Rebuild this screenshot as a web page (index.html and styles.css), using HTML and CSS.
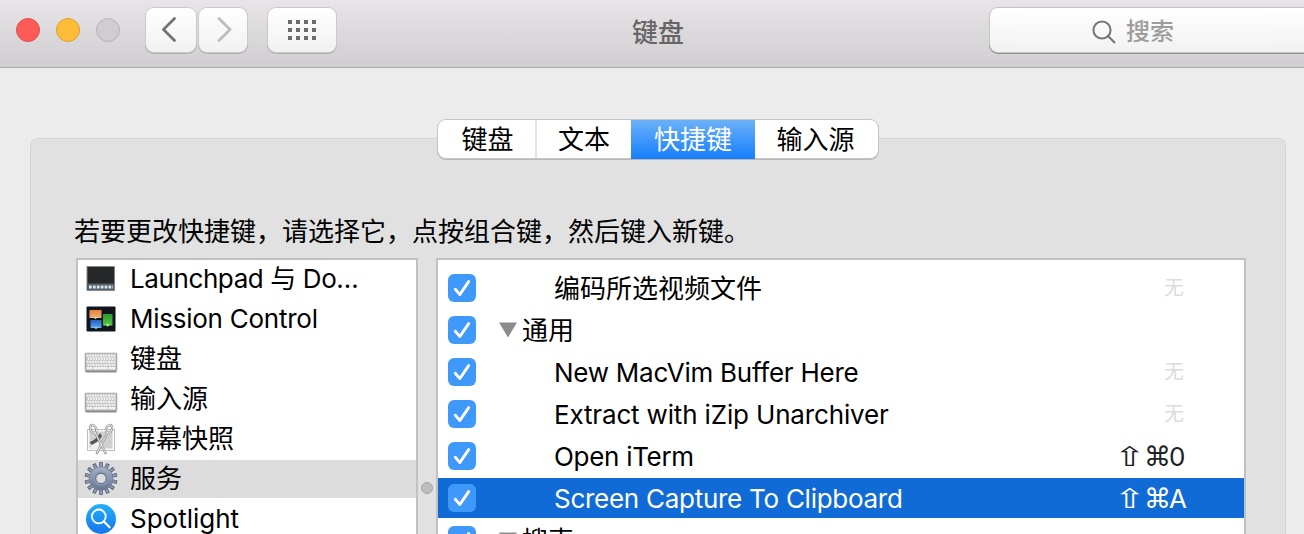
FILE: index.html
```html
<!DOCTYPE html>
<html lang="zh-CN">
<head>
<meta charset="utf-8">
<title>键盘</title>
<link rel="stylesheet" href="styles.css">
</head>
<body>
<svg width="0" height="0" class="defs">
  <defs>
    <linearGradient id="spot" x1="0" y1="0" x2="0" y2="1"><stop offset="0" stop-color="#22b2f6"/><stop offset="1" stop-color="#1673ee"/></linearGradient>
    <linearGradient id="gear" x1="0" y1="0" x2="0" y2="1"><stop offset="0" stop-color="#a6b3ca"/><stop offset="1" stop-color="#66758f"/></linearGradient>
    <linearGradient id="org" x1="0" y1="0" x2="0" y2="1"><stop offset="0" stop-color="#e5823c"/><stop offset="1" stop-color="#f2ad72"/></linearGradient>
    <linearGradient id="grn" x1="0" y1="0" x2="0" y2="1"><stop offset="0" stop-color="#2c9a2b"/><stop offset="1" stop-color="#52c646"/></linearGradient>
    <linearGradient id="blu" x1="0" y1="0" x2="0" y2="1"><stop offset="0" stop-color="#2361c0"/><stop offset="1" stop-color="#58a0ee"/></linearGradient>
    <symbol id="check" viewBox="0 0 28 28"><path d="M7.3 15.2 L11.8 20.6 L20.7 7.6" fill="none" stroke="#2f7fd6" stroke-width="3" stroke-linecap="round" stroke-linejoin="round" opacity=".6" transform="translate(0 .9)"/><path d="M7.3 15.2 L11.8 20.6 L20.7 7.6" fill="none" stroke="#fff" stroke-width="2.9" stroke-linecap="round" stroke-linejoin="round"/></symbol>
    <symbol id="kbd" viewBox="0 0 34 22">
      <rect x=".5" y="1.5" width="33" height="19.5" rx="1" fill="#8a8a8a"/>
      <rect x=".5" y=".5" width="33" height="18.5" rx="1" fill="#c4c4c4" stroke="#a2a2a2"/>
      <g stroke="#f1f1f1" stroke-width="2.3" stroke-dasharray="2 .8"><path d="M2 3.2H32"/><path d="M3 6.5H32"/><path d="M2 9.8H32"/><path d="M3 13.1H32"/></g>
      <path d="M2 16.4H8M9 16.4H24M25 16.4H32" stroke="#f1f1f1" stroke-width="2.3"/>
    </symbol>
  </defs>
</svg>
<header class="toolbar">
  <div class="lights"><i class="light red"></i><i class="light yellow"></i><i class="light off"></i></div>
  <div class="nav">
    <div class="btn back"><svg width="50" height="44" viewBox="0 0 50 44"><path d="M28.5 10.5 L17.5 21.5 L28.5 32.5" fill="none" stroke="#727272" stroke-width="2.8" stroke-linecap="round"/></svg></div>
    <div class="btn forward"><svg width="48" height="44" viewBox="0 0 48 44"><path d="M20 10.5 L31 21.5 L20 32.5" fill="none" stroke="#bdbdbd" stroke-width="2.8" stroke-linecap="round"/></svg></div>
  </div>
  <div class="btn all"><svg width="68" height="44" viewBox="0 0 68 44"><path d="M20 14H48M20 22H48M20 30H48" stroke="#6c6c6c" stroke-width="4" stroke-dasharray="4 4"/></svg></div>
  <div class="title">键盘</div>
  <div class="search"><svg width="26" height="26" viewBox="0 0 26 26"><g fill="none" stroke="#747474" stroke-width="2" stroke-linecap="round"><circle cx="11" cy="11" r="8.6"/><path d="M17.3 17.3 L23.5 23.5"/></g></svg><span>搜索</span></div>
</header>
<main class="content">
  <nav class="tabs"><div class="tab t1">键盘</div><div class="tab t2">文本</div><div class="tab t3">快捷键</div><div class="tab t4">输入源</div></nav>
  <section class="panel">
    <p class="hint">若要更改快捷键，请选择它，点按组合键，然后键入新键。</p>
    <div class="lists">
      <div class="cats">
        <div class="cat"><svg width="36" height="38" viewBox="0 0 36 38"><rect x="4" y="6.5" width="27.5" height="24" fill="#252729" stroke="#85898e"/><path d="M4.5 23.5H31V30H4.5z" fill="#53606c"/><path d="M6 27H30" stroke="#d4e3ec" stroke-width="3.2" stroke-dasharray="2.8 1.1"/></svg><span class="ls1">Launchpad 与 Do…</span></div>
        <div class="cat"><svg width="36" height="38" viewBox="0 0 36 38"><rect x="3.5" y="6.5" width="29" height="25" rx="1" fill="#11151c"/><rect x="6.5" y="10" width="12" height="8" fill="url(#org)"/><rect x="20" y="14" width="9.5" height="11.5" fill="url(#grn)"/><rect x="7.5" y="20" width="11" height="8" fill="url(#blu)"/><path d="M9 17.5h7M9 27.3h8M21 24.8h7" stroke="#fff" opacity=".3"/><circle cx="12.5" cy="17.7" r="1.2" fill="#b6dc90"/><circle cx="13" cy="27.8" r="1.3" fill="#6bd6e0"/><circle cx="24.7" cy="25" r="1.4" fill="#a4ef88"/></svg><span class="ls2">Mission Control</span></div>
        <div class="cat"><svg width="36" height="38" viewBox="0 0 36 38"><use href="#kbd" x="1" y="12.5" width="34" height="21"/></svg><span>键盘</span></div>
        <div class="cat"><svg width="36" height="38" viewBox="0 0 36 38"><use href="#kbd" x="1" y="12.5" width="34" height="21"/></svg><span>输入源</span></div>
        <div class="cat"><svg width="36" height="38" viewBox="0 0 36 38"><rect x="4.5" y="9.5" width="27" height="21" fill="#fafafa" stroke="#bdbdbd"/><path d="M6.5 11.5H29.5V28.5H6.5z" fill="#d0d0d0"/><path d="M6.5 22Q13 20 17 13L19 16L14 24L9 25z" fill="#555"/><path d="M6.5 28.5L9 25L17 20L15 28.5z" fill="#efefef"/><g fill="none" stroke="#8c8c8c" stroke-width="2.4"><path d="M12 12.5L23 34M24.5 12.5L13.5 34"/><ellipse cx="10.3" cy="9" rx="2.8" ry="4.2" transform="rotate(-25 10.3 9)"/><ellipse cx="26" cy="9" rx="2.8" ry="4.2" transform="rotate(25 26 9)"/></g><g fill="none" stroke="#e4e4e4" stroke-width="1.1"><path d="M12 12.5L22.7 33.3M24.5 12.5L13.8 33.3"/><ellipse cx="10.3" cy="9" rx="2.8" ry="4.2" transform="rotate(-25 10.3 9)"/><ellipse cx="26" cy="9" rx="2.8" ry="4.2" transform="rotate(25 26 9)"/></g></svg><span>屏幕快照</span></div>
        <div class="cat selected"><svg width="36" height="38" viewBox="0 0 36 38"><g transform="translate(18 18.5)"><g stroke="#536077" stroke-width="3.6"><path id="t" d="M0 -16.4V16.4"/><use href="#t" transform="rotate(25.7)"/><use href="#t" transform="rotate(51.4)"/><use href="#t" transform="rotate(77.1)"/><use href="#t" transform="rotate(102.9)"/><use href="#t" transform="rotate(128.6)"/><use href="#t" transform="rotate(154.3)"/></g><g stroke="#8e9bb2" stroke-width="2"><path id="u" d="M0 -15.6V15.6"/><use href="#u" transform="rotate(25.7)"/><use href="#u" transform="rotate(51.4)"/><use href="#u" transform="rotate(77.1)"/><use href="#u" transform="rotate(102.9)"/><use href="#u" transform="rotate(128.6)"/><use href="#u" transform="rotate(154.3)"/></g><circle r="11.8" fill="url(#gear)" stroke="#6d7a92" stroke-width=".6"/><circle r="7.3" fill="#8a98af"/><circle r="5.2" fill="#dcdcdc" stroke="#596880" stroke-width="1"/></g></svg><span>服务</span></div>
        <div class="cat"><svg width="36" height="38" viewBox="0 0 36 38"><circle cx="18" cy="19" r="15" fill="url(#spot)"/><g fill="none" stroke="#fff" stroke-width="1.8" stroke-linecap="round"><circle cx="15.8" cy="16.4" r="6.9"/><path d="M20.9 21.5L26.6 27.3" stroke-width="2.3"/></g></svg><span class="ls3">Spotlight</span></div>
      </div>
      <div class="divider"><i></i></div>
      <div class="services">
        <div class="svc"><svg class="box"><use href="#check"/></svg><span class="name">编码所选视频文件</span><span class="none">无</span></div>
        <div class="svc group"><svg class="box"><use href="#check"/></svg><svg class="tri" width="18" height="16" viewBox="0 0 18 16"><path d="M0 0.5H18L9 15.5z" fill="#8c8c8c"/></svg><span class="name">通用</span></div>
        <div class="svc"><svg class="box"><use href="#check"/></svg><span class="name n1">New MacVim Buffer Here</span><span class="none">无</span></div>
        <div class="svc"><svg class="box"><use href="#check"/></svg><span class="name n2">Extract with iZip Unarchiver</span><span class="none">无</span></div>
        <div class="svc"><svg class="box"><use href="#check"/></svg><span class="name n3">Open iTerm</span><span class="key"><b class="shift">⇧</b><b>⌘</b><em>0</em></span></div>
        <div class="svc selected"><svg class="box"><use href="#check"/></svg><span class="name n4">Screen Capture To Clipboard</span><span class="key"><b class="shift">⇧</b><b>⌘</b><em>A</em></span></div>
        <div class="svc group"><svg class="box"><use href="#check"/></svg><svg class="tri" width="18" height="16" viewBox="0 0 18 16"><path d="M0 0.5H18L9 15.5z" fill="#8c8c8c"/></svg><span class="name">搜索</span></div>
      </div>
    </div>
  </section>
</main>
</body>
</html>
```
FILE: styles.css
```css
* { box-sizing: border-box; }
html, body { height: 534px; overflow: hidden; }
body { margin: 0; background: #ececec; color: #000; font: 26px/38px Inter, "Noto Sans CJK SC", sans-serif; }
svg { display: block; flex: none; }
.defs { position: absolute; }

.toolbar { display: flex; height: 68px; padding: 8px 0 0 16px; overflow: hidden; background: linear-gradient(#e8e4e8, #d0ced0); border-bottom: 1px solid #a9a9a9; }
.toolbar > * { flex: none; }
.lights { display: flex; gap: 16px; padding-top: 10px; width: 130px; }
.light { width: 24px; height: 24px; border-radius: 50%; border: 1px solid; }
.red { background: #fc5b57; border-color: #df504d; }
.yellow { background: #fdbc38; border-color: #d9a035; }
.off { background: #cfcdcf; border-color: #b5b3b5; }
.nav { display: flex; gap: 3px; width: 122px; }
.btn { height: 44px; border-radius: 8px; background: linear-gradient(#fff, #f1f1f1); box-shadow: 0 0 0 1px #cbc9cb, 0 1px 0 1px #b0aeb0; }
.back { width: 50px; }
.forward { width: 48px; }
.all { width: 68px; }
.title { margin-left: 296px; width: 358px; color: #666; padding-top: 6px; font-weight: 500; }
.search { display: flex; width: 340px; height: 44px; padding: 11px 0 0 101px; background: linear-gradient(#fff, #f2f2f2); border-radius: 8px; box-shadow: 0 0 0 1px #c5c3c5, 0 1px 0 1px #929092; color: #9c9c9c; font-size: 24px; font-weight: 500; line-height: 26px; gap: 9px; }

.content { display: flex; flex-direction: column; height: 466px; overflow: hidden; }
.tabs { position: relative; z-index: 1; flex: none; display: flex; width: 440px; height: 38px; margin: 52px 0 -20px 438px; background: #fff; border-radius: 8px; box-shadow: 0 0 0 1px #c4c4c4, 0 1px 0 1px #b8b8b8; }
.tab { text-align: center; line-height: 39px; }
.t1 { width: 99px; padding-left: 2px; border-right: 2px solid #e3e3e3; }
.t2 { width: 94px; }
.t3 { width: 124px; height: 39px; color: #fff; background: linear-gradient(#6bb1f9, #167efc); }
.t4 { width: 121px; }
.panel { flex: none; margin: 0 18px 0 30px; height: 396px; overflow: hidden; padding: 74px 39px 0 45px; background: #e1e1e1; border: 1px solid #d5d5d5; border-bottom: 0; border-radius: 8px 8px 0 0; }
.hint { margin: 0 0 7px -2px; height: 38px; white-space: nowrap; }
.lists { display: flex; }
.cats { width: 342px; height: 276px; overflow: hidden; flex: none; border: 2px solid #c1c1c1; border-bottom: 0; background: #fff; display: flex; flex-direction: column; gap: 2px; }
.cat { display: flex; height: 38px; flex: none; gap: 11px; padding-left: 5px; white-space: nowrap; }
.cat.selected { background: #dcdcdc; }
.ls1 { letter-spacing: -.4px; }
.ls2 { letter-spacing: -.25px; }
.divider { width: 18px; flex: none; padding: 224px 0 0 3px; }
.divider i { display: block; width: 12px; height: 12px; border-radius: 50%; background: #bdbdbd; border: 1px solid #a5a5a5; }
.services { width: 810px; height: 276px; overflow: hidden; flex: none; border: 2px solid #c1c1c1; border-bottom: 0; background: #fff; padding-top: 8px; display: flex; flex-direction: column; gap: 2px; }
.svc { display: flex; align-items: center; height: 40px; flex: none; padding: 0 58px 0 10px; }
.svc.selected { background: #116bd6; color: #fff; }
.box { width: 28px; height: 28px; border-radius: 6px; background: #3f99fa; }
.name { margin-left: 78px; padding-top: 2px; white-space: nowrap; }
.n1 { letter-spacing: -.25px; }
.n2 { letter-spacing: -.16px; }
.n3 { letter-spacing: -.3px; }
.n4 { letter-spacing: -.27px; }
.group .tri { margin-left: 23px; }
.group .name { margin-left: 5px; }
.none { margin-left: auto; font-size: 20px; color: #dcdcdc; margin-right: 2px; }
.key { display: flex; margin-left: auto; padding-top: 2px; color: #222; }
.selected .key { color: #fff; }
.key b { width: 25px; font: 27px/38px "DejaVu Sans", sans-serif; }
.key .shift { transform: scaleX(1.4); }
.key em { width: 17px; font-style: normal; }
```
